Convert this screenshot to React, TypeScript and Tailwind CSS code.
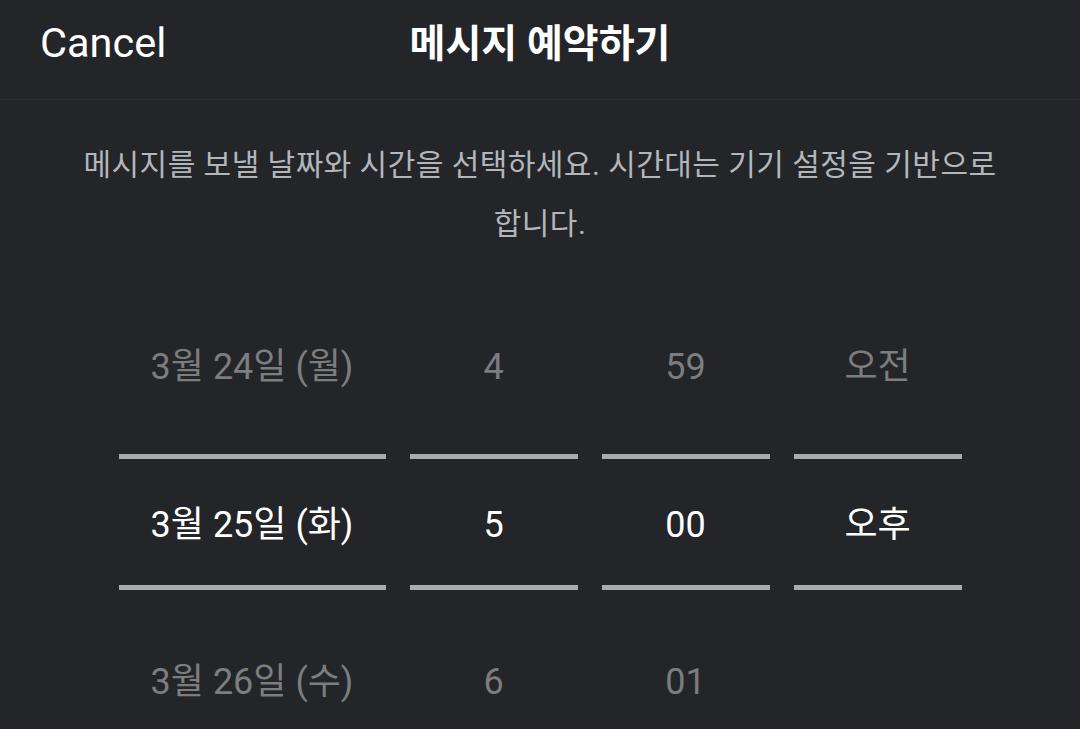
import React from "react";

const FONT = { fontFamily: 'Roboto, "Noto Sans CJK KR", sans-serif' };

type Col = { w: string; items: [string, string, string] };

const cols: Col[] = [
  { w: "w-[267px]", items: ["3월 24일 (월)", "3월 25일 (화)", "3월 26일 (수)"] },
  { w: "w-[168px]", items: ["4", "5", "6"] },
  { w: "w-[168px]", items: ["59", "00", "01"] },
  { w: "w-[168px]", items: ["오전", "오후", ""] },
];

function Column({ c }: { c: Col }) {
  return (
    <div className={`${c.w} flex flex-col`}>
      <div className="h-[179px] pt-[4px] flex items-center justify-center text-[36px] text-[#7b7d81]">
        {c.items[0]}
      </div>
      <div className="h-[5px] bg-[#a9abae]" />
      <div className="h-[126px] pt-[5px] flex items-center justify-center text-[36px] text-white">
        {c.items[1]}
      </div>
      <div className="h-[5px] bg-[#a9abae]" />
      <div className="h-[182px] pt-[2px] flex items-center justify-center text-[36px] text-[#7b7d81]">
        {c.items[2]}
      </div>
    </div>
  );
}

export default function App() {
  return (
    <div className="w-[1080px] h-[729px] overflow-hidden bg-[#232529]" style={FONT}>
      <div className="relative h-[100px] flex items-center pb-[12px] border-b border-[#2c2f34]">
        <div className="pl-[40px] text-[41.5px] text-white">Cancel</div>
        <div className="absolute left-0 right-0 top-0 h-[88px] flex items-center justify-center pointer-events-none">
          <span className="text-[39px] font-bold text-white">메시지 예약하기</span>
        </div>
      </div>
      <div className="mt-[35px] px-[70px] text-center text-[30px] tracking-[0.45px] leading-[59px] text-[#b3b6bb] break-keep">
        메시지를 보낼 날짜와 시간을 선택하세요. 시간대는 기기 설정을 기반으로 합니다.
      </div>
      <div className="mt-[22px] flex justify-center gap-[24px]">
        {cols.map((c, i) => (
          <Column key={i} c={c} />
        ))}
      </div>
    </div>
  );
}
